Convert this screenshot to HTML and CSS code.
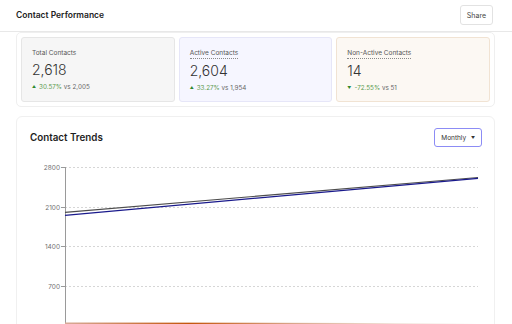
FILE: index.html
```html
<!DOCTYPE html>
<html>
<head>
  <meta charset="UTF-8">
  <link rel="stylesheet" href="styles.css">
</head>
<body>
  <div class="page">
    <header class="topbar">
      <h1 class="title">Contact Performance</h1>
      <button class="btn">Share</button>
    </header>

    <main class="content">
      <section class="stats">
        <div class="stat total">
          <div class="stat-label">Total Contacts</div>
          <div class="stat-value">2,618</div>
          <div class="stat-change"><span class="up">&#9650;</span><span class="pct">30.57%</span> vs 2,005</div>
        </div>
        <div class="stat active">
          <div class="stat-label dotted">Active Contacts</div>
          <div class="stat-value">2,604</div>
          <div class="stat-change"><span class="up">&#9650;</span><span class="pct">33.27%</span> vs 1,954</div>
        </div>
        <div class="stat inactive">
          <div class="stat-label dotted">Non-Active Contacts</div>
          <div class="stat-value">14</div>
          <div class="stat-change"><span class="up">&#9660;</span><span class="pct">-72.55%</span> vs 51</div>
        </div>
      </section>

      <section class="chart-card">
        <div class="chart-head">
          <h2 class="chart-title">Contact Trends</h2>
          <button class="btn select">Monthly <span class="caret">&#9660;</span></button>
        </div>
        <svg class="chart" width="452" height="390" viewBox="0 0 452 390">
          <defs>
            <linearGradient id="fade" x1="0" x2="1" y1="0" y2="0">
              <stop offset="0" stop-color="#d8aa98"/>
              <stop offset="0.3" stop-color="#c4560c"/>
              <stop offset="0.55" stop-color="#d9a58a"/>
              <stop offset="0.8" stop-color="#f3e4dc"/>
              <stop offset="1" stop-color="#ffffff"/>
            </linearGradient>
          </defs>
          <g class="grid">
            <line x1="35" x2="448" y1="7.5" y2="7.5"/>
            <line x1="35" x2="448" y1="47.5" y2="47.5"/>
            <line x1="35" x2="448" y1="86.5" y2="86.5"/>
            <line x1="35" x2="448" y1="126.5" y2="126.5"/>
          </g>
          <g class="ticks">
            <line x1="31" x2="35" y1="7.5" y2="7.5"/>
            <line x1="31" x2="35" y1="47.5" y2="47.5"/>
            <line x1="31" x2="35" y1="86.5" y2="86.5"/>
            <line x1="31" x2="35" y1="126.5" y2="126.5"/>
            <line x1="35.5" x2="35.5" y1="7" y2="167"/>
            <line x1="35" x2="448" y1="166.5" y2="166.5"/>
          </g>
          <g class="labels">
            <text x="30" y="10">2800</text>
            <text x="30" y="50">2100</text>
            <text x="30" y="89">1400</text>
            <text x="30" y="129">700</text>
          </g>
          <line class="series-total" x1="35" y1="52.4" x2="448" y2="17.5"/>
          <line class="series-active" x1="35" y1="55.3" x2="448" y2="18.3"/>
          <line class="series-inactive" x1="35" y1="163.3" x2="448" y2="164"/>
        </svg>
      </section>
    </main>
  </div>
</body>
</html>
```

FILE: styles.css
```css
* {
  box-sizing: border-box;
}

html, body {
  margin: 0;
  height: 100%;
  overflow: hidden;
}

body {
  font-family: Inter, "Noto Sans", sans-serif;
  background-color: #ffffff;
  color: #1f1f1f;
}

.page {
  display: flex;
  flex-direction: column;
  height: 324px;
}

.topbar {
  display: flex;
  align-items: center;
  justify-content: space-between;
  height: 32px;
  padding: 0 19px 1px 16px;
  border-bottom: 1px solid #e8e8e8;
  flex-shrink: 0;
}

.title {
  margin: 0;
  font-size: 8.5px;
  font-weight: 600;
  color: #222222;
}

.btn {
  font-family: inherit;
  font-size: 7px;
  color: #444444;
  background-color: #ffffff;
  border: 1px solid #e2e2e2;
  border-radius: 3px;
  padding: 0 6px;
  height: 20px;
  cursor: pointer;
}

.content {
  flex: 1;
  overflow-y: scroll;
  padding: 0 17px 16px 16px;
}

.content::-webkit-scrollbar {
  width: 2px;
}

.content::-webkit-scrollbar-track {
  background: transparent;
}

.content::-webkit-scrollbar-thumb {
  background-color: #9a9a9a;
}

.stats {
  display: grid;
  grid-template-columns: 1fr 1fr 1fr;
  gap: 4px;
  padding: 4px;
  border: 1px solid #efefef;
  border-radius: 5px;
}

.stat {
  display: flex;
  flex-direction: column;
  align-items: flex-start;
  height: 65px;
  padding: 11px 10px;
  border: 1px solid #e6e6e6;
  border-radius: 3px;
  background-color: #f6f6f6;
}

.stat.active {
  background-color: #f6f6ff;
  border-color: #e6e6f8;
}

.stat.inactive {
  background-color: #fcf8f3;
  border-color: #f1e3d3;
}

.stat-label {
  font-size: 6.5px;
  color: #555555;
  line-height: 9px;
}

.stat-label.dotted {
  border-bottom: 1px dotted #8a8a8a;
}

.stat-value {
  font-size: 14px;
  font-weight: 300;
  color: #333333;
  line-height: 18px;
  margin-top: 3px;
}

.stat-change {
  font-size: 6.3px;
  line-height: 9px;
  color: #666666;
  margin-top: 3px;
}

.up {
  font-size: 4px;
  color: #2f8a2f;
  margin-right: 3px;
  vertical-align: 1px;
}

.pct {
  color: #5a9a4e;
}

.chart-card {
  margin-top: 9px;
  padding: 11px 12px 13px 13px;
  border: 1px solid #f0f0f0;
  border-radius: 6px;
}

.chart-head {
  display: flex;
  align-items: center;
  justify-content: space-between;
  height: 19px;
}

.chart-title {
  margin: 0;
  font-size: 9.8px;
  font-weight: 600;
  color: #1e1e1e;
}

.btn.select {
  height: 19px;
  padding: 0 6px;
  border-color: #8c8cf5;
  color: #333333;
  font-size: 6.5px;
}

.caret {
  font-size: 4px;
  margin-left: 3px;
  vertical-align: 1px;
}

.chart {
  display: block;
  margin-top: 13px;
}

.grid line {
  stroke: #d6d6d6;
  stroke-width: 1;
  stroke-dasharray: 2 2;
}

.ticks line {
  stroke: #9a9a9a;
  stroke-width: 1;
}

.labels text {
  font-family: Inter, "Noto Sans", sans-serif;
  font-size: 6.5px;
  fill: #707070;
  text-anchor: end;
}

.series-total {
  stroke: #4d4d4d;
  stroke-width: 1.2;
}

.series-active {
  stroke: #1a1a8c;
  stroke-width: 1.2;
}

.series-inactive {
  stroke: url(#fade);
  stroke-width: 1.5;
}
```
